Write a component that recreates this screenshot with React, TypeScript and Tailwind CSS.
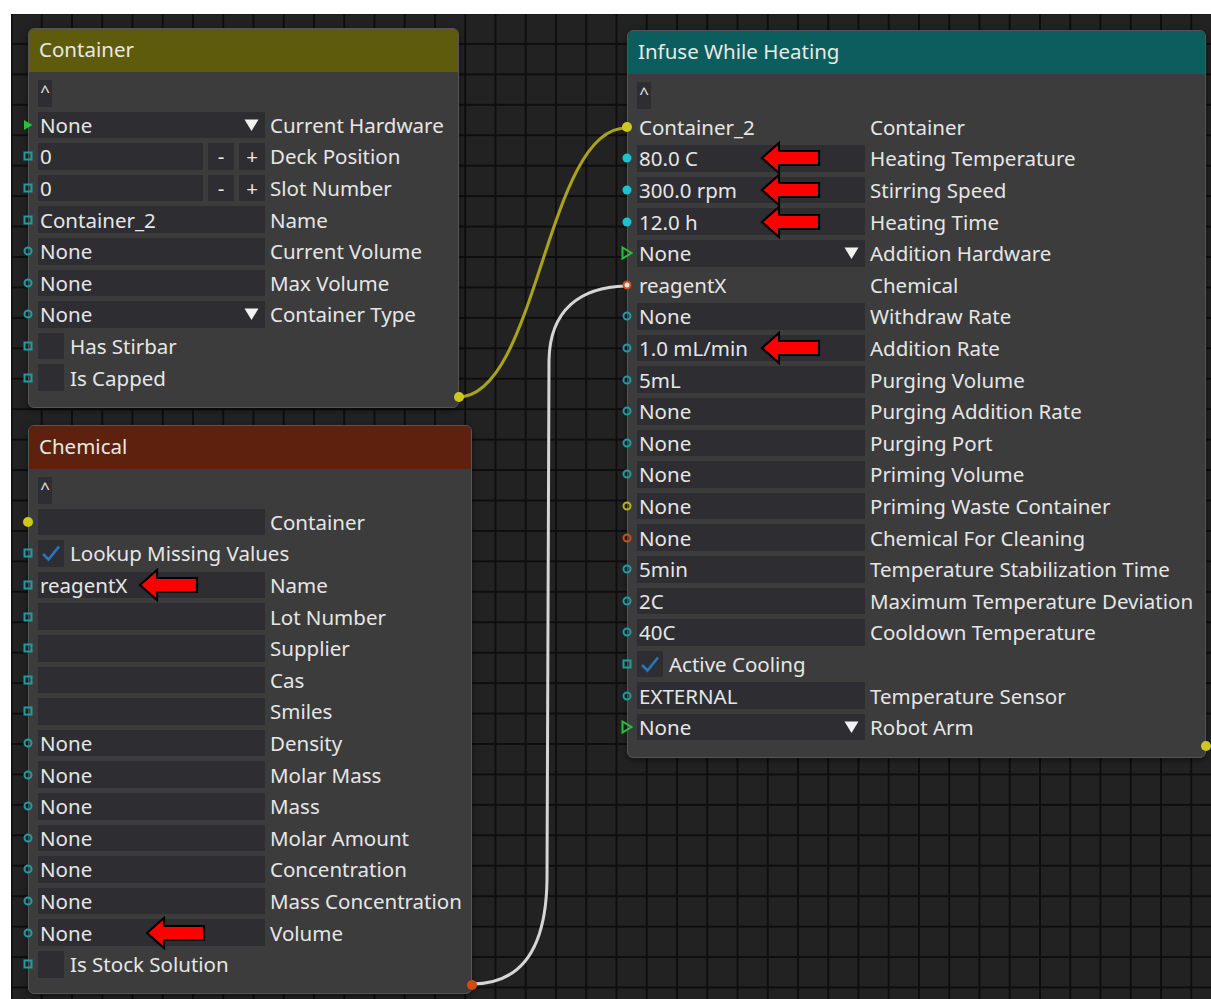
import { ReactNode } from "react";

type Pin = "tri" | "triOpen" | "sq" | "ring" | "dot" | "yDot" | "yRing" | "oRing" | "oLinked";

type Row =
  | { kind: "text"; value: string; label: string; pin: Pin; bare?: boolean; dropdown?: boolean; arrow?: string }
  | { kind: "step"; value: string; label: string; pin: Pin }
  | { kind: "check"; label: string; checked?: boolean; pin: Pin };

const containerRows: Row[] = [
  { kind: "text", value: "None", label: "Current Hardware", pin: "tri", dropdown: true },
  { kind: "step", value: "0", label: "Deck Position", pin: "sq" },
  { kind: "step", value: "0", label: "Slot Number", pin: "sq" },
  { kind: "text", value: "Container_2", label: "Name", pin: "sq" },
  { kind: "text", value: "None", label: "Current Volume", pin: "ring" },
  { kind: "text", value: "None", label: "Max Volume", pin: "ring" },
  { kind: "text", value: "None", label: "Container Type", pin: "ring", dropdown: true },
  { kind: "check", label: "Has Stirbar", pin: "sq" },
  { kind: "check", label: "Is Capped", pin: "sq" },
];

const chemicalRows: Row[] = [
  { kind: "text", value: "", label: "Container", pin: "yDot" },
  { kind: "check", label: "Lookup Missing Values", checked: true, pin: "sq" },
  { kind: "text", value: "reagentX", label: "Name", pin: "sq", arrow: "left-[100px]" },
  { kind: "text", value: "", label: "Lot Number", pin: "sq" },
  { kind: "text", value: "", label: "Supplier", pin: "sq" },
  { kind: "text", value: "", label: "Cas", pin: "sq" },
  { kind: "text", value: "", label: "Smiles", pin: "sq" },
  { kind: "text", value: "None", label: "Density", pin: "ring" },
  { kind: "text", value: "None", label: "Molar Mass", pin: "ring" },
  { kind: "text", value: "None", label: "Mass", pin: "ring" },
  { kind: "text", value: "None", label: "Molar Amount", pin: "ring" },
  { kind: "text", value: "None", label: "Concentration", pin: "ring" },
  { kind: "text", value: "None", label: "Mass Concentration", pin: "ring" },
  { kind: "text", value: "None", label: "Volume", pin: "ring", arrow: "left-[107px]" },
  { kind: "check", label: "Is Stock Solution", pin: "sq" },
];

const infuseRows: Row[] = [
  { kind: "text", value: "Container_2", label: "Container", pin: "yDot", bare: true },
  { kind: "text", value: "80.0 C", label: "Heating Temperature", pin: "dot", arrow: "left-[123px]" },
  { kind: "text", value: "300.0 rpm", label: "Stirring Speed", pin: "dot", arrow: "left-[123px]" },
  { kind: "text", value: "12.0 h", label: "Heating Time", pin: "dot", arrow: "left-[123px]" },
  { kind: "text", value: "None", label: "Addition Hardware", pin: "triOpen", dropdown: true },
  { kind: "text", value: "reagentX", label: "Chemical", pin: "oLinked", bare: true },
  { kind: "text", value: "None", label: "Withdraw Rate", pin: "ring" },
  { kind: "text", value: "1.0 mL/min", label: "Addition Rate", pin: "ring", arrow: "left-[123px]" },
  { kind: "text", value: "5mL", label: "Purging Volume", pin: "ring" },
  { kind: "text", value: "None", label: "Purging Addition Rate", pin: "ring" },
  { kind: "text", value: "None", label: "Purging Port", pin: "ring" },
  { kind: "text", value: "None", label: "Priming Volume", pin: "ring" },
  { kind: "text", value: "None", label: "Priming Waste Container", pin: "yRing" },
  { kind: "text", value: "None", label: "Chemical For Cleaning", pin: "oRing" },
  { kind: "text", value: "5min", label: "Temperature Stabilization Time", pin: "ring" },
  { kind: "text", value: "2C", label: "Maximum Temperature Deviation", pin: "ring" },
  { kind: "text", value: "40C", label: "Cooldown Temperature", pin: "ring" },
  { kind: "check", label: "Active Cooling", checked: true, pin: "sq" },
  { kind: "text", value: "EXTERNAL", label: "Temperature Sensor", pin: "ring" },
  { kind: "text", value: "None", label: "Robot Arm", pin: "triOpen", dropdown: true },
];

function PinIcon({ type }: { type: Pin }) {
  const base = "absolute left-[-1px] top-1/2 -translate-x-1/2 -translate-y-1/2";
  switch (type) {
    case "tri":
      return (
        <svg className={base} width="10" height="11" viewBox="0 0 10 11">
          <polygon points="1,0.5 9.5,5.5 1,10.5" fill="#25c23a" />
        </svg>
      );
    case "triOpen":
      return (
        <svg className={base} width="12" height="14" viewBox="0 0 12 14">
          <polygon points="1.5,1.5 10.5,7 1.5,12.5" fill="none" stroke="#25c23a" strokeWidth="2" />
        </svg>
      );
    case "sq":
      return <div className={`${base} w-[9px] h-[9px] border-2 border-[#1c9da3]`} />;
    case "ring":
      return <div className={`${base} w-[9px] h-[9px] rounded-full border-2 border-[#1c9da3]`} />;
    case "dot":
      return <div className={`${base} w-[9px] h-[9px] rounded-full bg-[#19c3cf]`} />;
    case "yDot":
      return <div className={`${base} w-[10px] h-[10px] rounded-full bg-[#cdc81e]`} />;
    case "yRing":
      return <div className={`${base} w-[9px] h-[9px] rounded-full border-2 border-[#b8b21c]`} />;
    case "oRing":
      return <div className={`${base} w-[9px] h-[9px] rounded-full border-2 border-[#c9501a]`} />;
    case "oLinked":
      return <div className={`${base} w-[9px] h-[9px] rounded-full border-2 border-[#c9501a] bg-[#e4e4e4]`} />;
  }
}

function RedArrow({ pos }: { pos: string }) {
  return (
    <svg className={`absolute ${pos} top-1/2 -translate-y-1/2`} width="62" height="34" viewBox="0 0 62 34">
      <polygon
        points="2,17 19,2 19,10 59,10 59,24 19,24 19,32"
        fill="#ff0000"
        stroke="#000"
        strokeWidth="2.2"
        strokeLinejoin="miter"
      />
    </svg>
  );
}

function Caret() {
  return (
    <svg className="absolute right-[6px] top-1/2 -translate-y-1/2" width="15" height="13" viewBox="0 0 15 13">
      <polygon points="0.5,1 14.5,1 7.5,12.5" fill="#f2f2f2" />
    </svg>
  );
}

function Field({ w, children, bare }: { w: string; children?: ReactNode; bare?: boolean }) {
  return (
    <div className={`${w} h-full relative flex items-center pl-[2px] ${bare ? "" : "bg-[#2e2e32]"}`}>
      {children}
    </div>
  );
}

function NodeRow({ row, fieldW }: { row: Row; fieldW: string }) {
  return (
    <div className="relative h-[26.6px] flex items-center pl-[9px]">
      <PinIcon type={row.pin} />
      {row.kind === "text" && (
        <>
          <Field w={fieldW} bare={row.bare}>
            <span>{row.value}</span>
            {row.dropdown && <Caret />}
            {row.arrow && <RedArrow pos={row.arrow} />}
          </Field>
          <span className="ml-[5px] whitespace-nowrap">{row.label}</span>
        </>
      )}
      {row.kind === "step" && (
        <>
          <div className={`${fieldW} h-full flex gap-[5px]`}>
            <div className="flex-1 h-full bg-[#2e2e32] flex items-center pl-[2px]">{row.value}</div>
            <div className="w-[26px] h-full bg-[#2e2e32] flex items-center justify-center">-</div>
            <div className="w-[26px] h-full bg-[#2e2e32] flex items-center justify-center">+</div>
          </div>
          <span className="ml-[5px] whitespace-nowrap">{row.label}</span>
        </>
      )}
      {row.kind === "check" && (
        <>
          <div className="w-[26px] h-full bg-[#2e2e32] flex items-center justify-center">
            {row.checked && (
              <svg width="20" height="18" viewBox="0 0 20 18">
                <polyline points="2,10 7.5,15.5 18,2.5" fill="none" stroke="#2477bf" strokeWidth="2.6" />
              </svg>
            )}
          </div>
          <span className="ml-[6px] whitespace-nowrap">{row.label}</span>
        </>
      )}
    </div>
  );
}

function GraphNode({
  title,
  head,
  place,
  fieldW,
  rows,
  outPin,
  pb,
}: {
  title: string;
  head: string;
  place: string;
  fieldW: string;
  rows: Row[];
  outPin: string;
  pb: string;
}) {
  return (
    <div className={`absolute ${place} rounded-[6px] border border-[#555] bg-[#3c3c3c] shadow-[0_2px_6px_rgba(0,0,0,0.5)]`}>
      <div className={`${head} h-[43px] rounded-t-[5px] flex items-center pl-[10px] pb-[4px] text-[20.5px] text-[#e9e9e4]`}>
        {title}
      </div>
      <div className={`flex flex-col gap-[5px] pt-[8px] ${pb}`}>
        <div className="pl-[9px] h-[26.6px]">
          <div className="w-[14px] h-full bg-[#2e2e32] text-[17px] leading-[22px] text-center">^</div>
        </div>
        {rows.map((r, i) => (
          <NodeRow key={i} row={r} fieldW={fieldW} />
        ))}
      </div>
      <div className={`absolute right-[-6px] ${outPin} w-[10px] h-[10px] rounded-full`} />
    </div>
  );
}

export default function App() {
  return (
    <div className="w-[1211px] h-[999px] bg-white pt-[14px] pl-[11px] overflow-hidden">
      <div
        className="relative w-full h-full bg-[#222222] bg-[linear-gradient(90deg,#0e0e0e_2px,transparent_2px),linear-gradient(180deg,#0e0e0e_2px,transparent_2px)] bg-[size:30.25px_30.45px] bg-[position:-0.5px_-1.5px] text-[#e6e6e6] text-[20.5px] leading-[26px]"
        style={{ fontFamily: '"Noto Sans", "Open Sans", sans-serif' }}
      >
        <svg className="absolute inset-0" width="1200" height="985">
          <path d="M447,383 C527,383 535,114 615,114" fill="none" stroke="#a9a31c" strokeWidth="3" />
          <path
            d="M461,970 C509,970 535,936 536,866 L538,346 C539,296 569,273 615,272"
            fill="none"
            stroke="#d6d6d6"
            strokeWidth="3"
          />
        </svg>

        <GraphNode
          title="Container"
          head="bg-[#5e5b0d]"
          place="left-[17px] top-[14px] w-[431px]"
          fieldW="w-[227px]"
          rows={containerRows}
          outPin="bottom-[5px] bg-[#cdc81e]"
          pb="pb-[16px]"
        />
        <GraphNode
          title="Chemical"
          head="bg-[#5d210d]"
          place="left-[17px] top-[411px] w-[444px]"
          fieldW="w-[227px]"
          rows={chemicalRows}
          outPin="bottom-[3px] bg-[#d24a12]"
          pb="pb-[15px]"
        />
        <GraphNode
          title="Infuse While Heating"
          head="bg-[#0c5d5d]"
          place="left-[616px] top-[16px] w-[579px]"
          fieldW="w-[228px]"
          rows={infuseRows}
          outPin="bottom-[6px] bg-[#cdc81e]"
          pb="pb-[17px]"
        />
      </div>
    </div>
  );
}
